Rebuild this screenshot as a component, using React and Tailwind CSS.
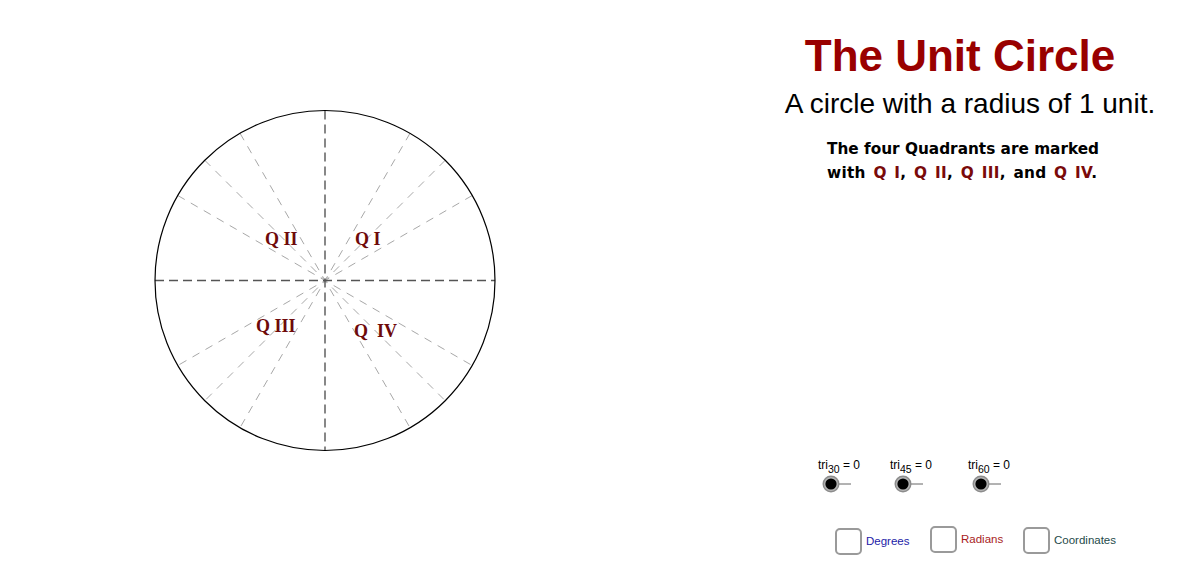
const CX = 175;
const CY = 175.5;
const R = 170;

function Circle() {
  const diag = [30, 45, 60, 120, 135, 150].map((a) => {
    const rad = (a * Math.PI) / 180;
    return {
      a,
      x1: CX + R * Math.cos(rad),
      y1: CY - R * Math.sin(rad),
      x2: CX - R * Math.cos(rad),
      y2: CY + R * Math.sin(rad),
    };
  });
  const lbl = {
    fontFamily: "'Liberation Serif', 'Times New Roman', serif",
    fontWeight: 700,
    fontSize: 18,
    fill: "#6e0a0a",
  };
  return (
    <svg width="350" height="352" viewBox="0 0 350 352">
      {diag.map((d) => (
        <line
          key={d.a}
          x1={d.x1}
          y1={d.y1}
          x2={d.x2}
          y2={d.y2}
          stroke="#a8a8a8"
          strokeWidth="1"
          strokeDasharray="8 7"
        />
      ))}
      <line x1={CX - R} y1={CY} x2={CX + R} y2={CY} stroke="#555" strokeWidth="1.4" strokeDasharray="9 5" />
      <line x1={CX} y1={CY - R} x2={CX} y2={CY + R} stroke="#555" strokeWidth="1.4" strokeDasharray="9 5" />
      <circle cx={CX} cy={CY} r={R} fill="none" stroke="#000" strokeWidth="1.2" />
      <text x="115" y="140" style={lbl}>Q II</text>
      <text x="205" y="140" style={lbl}>Q I</text>
      <text x="106" y="227" style={lbl}>Q III</text>
      <text x="204" y="232" style={lbl}>{"Q\u00a0\u00a0IV"}</text>
    </svg>
  );
}

function Slider({ sub, w }) {
  return (
    <div className={"flex flex-col " + w}>
      <div className="text-[12px] leading-none text-black font-['Liberation_Sans',Arial,sans-serif] whitespace-nowrap">
        tri<sub className="text-[10.5px] top-[4px]">{sub}</sub> = 0
      </div>
      <svg className="mt-[4px]" width="34" height="18" viewBox="0 0 34 18">
        <line x1="13" y1="9" x2="33" y2="9" stroke="#666" strokeWidth="1" />
        <circle cx="13" cy="9" r="8.5" fill="#8c8c8c" />
        <circle cx="13" cy="9" r="7" fill="#b5b5b5" />
        <circle cx="13" cy="9" r="5.6" fill="#000" />
      </svg>
    </div>
  );
}

function Check({ label, color, w, mt }) {
  return (
    <div className={"flex items-center " + w + " " + mt}>
      <div className="w-[27px] h-[27px] border-2 border-[#9a9a9a] rounded-[5px] bg-white shrink-0" />
      <span
        className={"ml-[4px] text-[11.5px] leading-none font-['Liberation_Sans',Arial,sans-serif] " + color}
      >
        {label}
      </span>
    </div>
  );
}

export default function App() {
  return (
    <div className="w-[1191px] h-[570px] bg-white flex overflow-hidden">
      <div className="w-[750px] shrink-0 pl-[150px] pt-[105px]">
        <Circle />
      </div>
      <div className="flex flex-col w-[441px]">
        <div className="w-[420px] mt-[34px] text-center text-[44px] leading-none font-bold text-[#990000] font-['Liberation_Sans',Arial,sans-serif] whitespace-nowrap">
          The Unit Circle
        </div>
        <div className="w-[420px] pl-[20px] mt-[12px] text-center text-[28px] leading-none text-black font-['Liberation_Sans',Arial,sans-serif] whitespace-nowrap">
          A circle with a radius of 1 unit.
        </div>
        <div className="ml-[77px] mt-[19px] text-[15.3px] leading-[24px] font-bold text-black font-['DejaVu_Sans',sans-serif]">
          <div className="whitespace-nowrap">The four Quadrants are marked</div>
          <div className="whitespace-nowrap [word-spacing:2px] tracking-[0.3px]">
            with <span className="text-[#7a0a0a]">Q I</span>, <span className="text-[#7a0a0a]">Q II</span>,{" "}
            <span className="text-[#7a0a0a]">Q III</span>, and <span className="text-[#7a0a0a]">Q IV</span>.
          </div>
        </div>
        <div className="flex ml-[68px] mt-[274px]">
          <Slider sub="30" w="w-[72px]" />
          <Slider sub="45" w="w-[78px]" />
          <Slider sub="60" w="w-[72px]" />
        </div>
        <div className="flex items-start ml-[85px] mt-[33px]">
          <Check label="Degrees" color="text-[#1c1ca8]" w="w-[95px]" mt="mt-[2px]" />
          <Check label="Radians" color="text-[#a81c1c]" w="w-[93px]" mt="mt-0" />
          <Check label="Coordinates" color="text-[#244a4a]" w="w-[110px]" mt="mt-[1px]" />
        </div>
      </div>
    </div>
  );
}
